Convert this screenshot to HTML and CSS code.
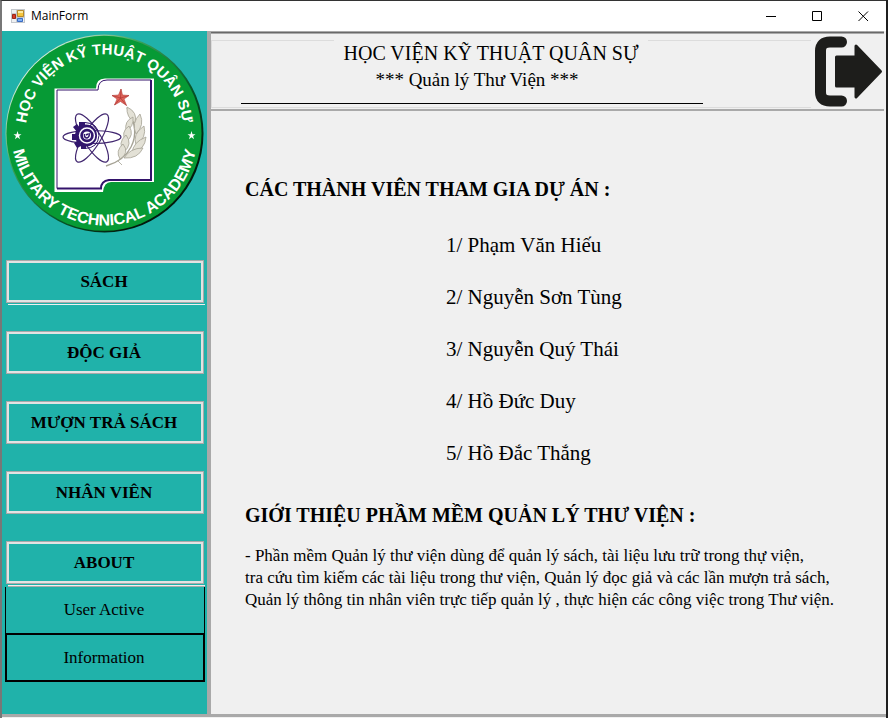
FILE: index.html
```html
<!DOCTYPE html>
<html lang="vi">
<head>
<meta charset="utf-8">
<meta name="viewport" content="width=device-width, initial-scale=1">
<title>MainForm</title>
<link rel="stylesheet" href="styles.css">
</head>
<body>
<div class="window">
  <header class="titlebar">
    <svg class="app-icon" viewBox="0 0 14 14" aria-hidden="true">
      <path d="M0 0H14V14H0Z" fill="#c3c7cc"/>
      <path d="M1 1H5V4H1ZM1 10H5V13H1ZM12 9H13V13H12Z" fill="#eef0f2"/>
      <path d="M6.500 1.500H12.500V7.500H6.500Z" fill="#f6c63c" stroke="#b8892a"/>
      <path d="M7 2H12V4H7Z" fill="#fdeaa0"/>
      <path d="M1.500 5.500H4.500V9.500H1.500Z" fill="#d83a26" stroke="#9c2418"/>
      <path d="M6.500 9.500H11.500V12.500H6.500Z" fill="#7fb0f5" stroke="#3a6cc4"/>
    </svg>
    <span class="window-title">MainForm</span>
    <div class="window-controls">
      <button type="button" aria-label="Minimize"><svg viewBox="0 0 11 11"><path d="M0 5.500H10"/></svg></button>
      <button type="button" aria-label="Maximize"><svg viewBox="0 0 11 11"><path d="M.5 .5H9.500V9.500H.5Z"/></svg></button>
      <button type="button" aria-label="Close"><svg viewBox="0 0 11 11"><path d="M.5 .5L10 10M10 .5L.5 10"/></svg></button>
    </div>
  </header>

  <div class="workspace">
    <aside class="sidebar">
      <svg class="logo" viewBox="2 31 205 205" role="img" aria-label="Học viện Kỹ thuật Quân sự">
        <defs>
          <linearGradient id="rim" x1="0" y1="0" x2="1" y2="1">
            <stop offset="0.15" stop-color="#d4ebd8"/>
            <stop offset="0.35" stop-color="#3ba35a"/>
            <stop offset="0.6" stop-color="#07592a"/>
            <stop offset="0.8" stop-color="#021a0c"/>
          </linearGradient>
          <path id="arc-top" d="M25.500 133.500A79 79 0 0 1 183.500 133.500"/>
          <path id="arc-bottom" d="M11.500 132.500A93 93 0 0 0 197.500 132.500"/>
        </defs>
        <circle cx="104.500" cy="133.500" r="99" fill="url(#rim)"/>
        <circle cx="104" cy="133.300" r="97.500" fill="#069a35"/>
        <g class="logo-text">
          <text class="logo-text-top"><textPath href="#arc-top" startOffset="50%">HỌC VIỆN KỸ THUẬT QUÂN SỰ</textPath></text>
          <text><textPath href="#arc-bottom" startOffset="50%">MILITARY TECHNICAL ACADEMY</textPath></text>
        </g>
        <path id="small-star" d="M17.500 131L18.500 134.200H21.500L19.100 136.100L20 139.200L17.500 137.300L15 139.200L15.900 136.100L13.500 134.200H16.500Z" fill="#fff"/>
        <use href="#small-star" x="174"/>
        <path d="M54.500 88.500H96Q96 78.500 105 78.500H154V182H111Q104 182 103 192H54.500Z" fill="#fff"/>
        <path d="M57 90H98Q98 80 107 80H151V180H109Q101 181 101 188.500H57Z" fill="#fff" stroke="#33136b"/>
        <path d="M151 80V180H109Q101 181 101 188.500H57" fill="none" stroke="#33136b" stroke-width="2"/>
        <g fill="none" stroke="#40266f" stroke-width="1.200">
          <ellipse cx="92" cy="137" rx="29" ry="6.500"/>
          <ellipse cx="92" cy="138" rx="28" ry="8.500" transform="rotate(58 92 138)"/>
          <ellipse cx="92" cy="138" rx="28" ry="8.500" transform="rotate(-58 92 138)"/>
        </g>
        <g fill="#31156d">
          <circle cx="86" cy="135.500" r="11"/>
          <path d="M79 122H85V128H79ZM73 127L77 124L81 129L77 132ZM72 134H79V140H72ZM74 143L80 139L83 145L77 148ZM81 142H86V149H81Z"/>
          <path d="M85 122.500Q98 123 99 135.500Q98 148 85 148.500" fill="none" stroke="#31156d"/>
        </g>
        <circle cx="87" cy="135.500" r="7.500" fill="none" stroke="#fff" stroke-width="1.500"/>
        <circle cx="87" cy="135.500" r="4" fill="#fff"/>
        <path d="M84.500 134Q84 138 87 138Q90 137 89 133M86 135L88 134" fill="none" stroke="#31156d" stroke-width="1.500"/>
        <path d="M121 89L122.500 95L129 95.500L124 99L126.500 105.500L120.500 101.500L114.500 105L117 99L112 95.500L118.500 95Z" fill="#df6459" stroke="#b94440" stroke-width=".6"/>
        <path d="M120.500 98L121 89M120.500 98L129 95.500M120.500 98L126.500 105.500M120.500 98L114.500 105M120.500 98L112 95.500" stroke="#a82f30" stroke-width=".6"/>
        <g fill="#e3e1d6" stroke="#a5a294" stroke-width=".8">
          <path d="M106 166Q124 161 131 147Q140 130 127 108" fill="none" stroke-width="1.300"/>
          <path d="M127 107Q138 112 135 123Q126 117 127 107Z"/>
          <path d="M133 117Q124 121 126 131Q134 127 133 117Z"/>
          <path d="M140 114Q145 125 136 134Q131 123 140 114Z"/>
          <path d="M129 126Q120 132 126 142Q135 135 129 126Z"/>
          <path d="M144 126Q147 138 136 145Q132 134 144 126Z"/>
          <path d="M126 135Q117 143 124 152Q133 144 126 135Z"/>
          <path d="M146 137Q145 150 132 153Q133 142 146 137Z"/>
          <path d="M123 144Q115 151 120 159Q130 153 123 144Z"/>
          <path d="M143 148Q138 159 124 158Q130 148 143 148Z"/>
          <path d="M118 161L122 165" fill="none"/>
        </g>
      </svg>

      <nav class="menu">
        <div class="menu-group menu-group-ruled"><button type="button" class="menu-button">SÁCH</button></div>
        <div class="menu-group"><button type="button" class="menu-button">ĐỘC GIẢ</button></div>
        <div class="menu-group"><button type="button" class="menu-button">MƯỢN TRẢ SÁCH</button></div>
        <div class="menu-group"><button type="button" class="menu-button">NHÂN VIÊN</button></div>
        <div class="menu-group menu-group-ruled menu-group-open"><button type="button" class="menu-button">ABOUT</button></div>
      </nav>
      <div class="submenu">
        <button type="button" class="submenu-button submenu-button-thin">User Active</button>
        <button type="button" class="submenu-button">Information</button>
      </div>
    </aside>

    <main class="main">
      <div class="banner">
        <div class="banner-box">
          <h1>HỌC VIỆN KỸ THUẬT QUÂN SỰ</h1>
          <p>*** Quản lý Thư Viện ***</p>
        </div>
        <button type="button" class="exit" aria-label="Thoát">
          <svg viewBox="814 35 70 73">
            <path d="M842.500 42H831Q821.500 42 821.500 51V92Q821.500 101 831 101H842.500" fill="none" stroke="#1d1d1b" stroke-width="11" stroke-linecap="round"/>
            <path d="M837.500 57H857V46L881.500 71.500L857 97V86H837.500Z" fill="#1d1d1b" stroke="#1d1d1b" stroke-width="3" stroke-linejoin="round"/>
          </svg>
        </button>
      </div>

      <section class="about">
        <h2>CÁC THÀNH VIÊN THAM GIA DỰ ÁN :</h2>
        <ul class="members">
          <li>1/ Phạm Văn Hiếu</li>
          <li>2/ Nguyễn Sơn Tùng</li>
          <li>3/ Nguyễn Quý Thái</li>
          <li>4/ Hồ Đức Duy</li>
          <li>5/ Hồ Đắc Thắng</li>
        </ul>
        <h2>GIỚI THIỆU PHẦM MỀM QUẢN LÝ THƯ VIỆN :</h2>
        <p class="intro">- Phần mềm Quản lý thư viện dùng để quản lý sách, tài liệu lưu trữ trong thự viện,<br>
        tra cứu tìm kiếm các tài liệu trong thư viện, Quản lý đọc giả và các lần mượn trả sách,<br>
        Quản lý thông tin nhân viên trực tiếp quản lý , thực hiện các công việc trong Thư viện.</p>
      </section>
    </main>
  </div>
</div>
</body>
</html>
```
FILE: styles.css
```css
* {
  box-sizing: border-box;
}

body {
  margin: 0;
  background: #1f1f1f;
  color: #000;
  font-family: "Palatino Linotype", "Liberation Serif", serif;
}

button {
  margin: 0;
  padding: 0;
  border: 0;
  background: none;
  color: inherit;
  font: inherit;
}

h1,
h2,
p,
ul {
  margin: 0;
  padding: 0;
}

.window {
  display: flex;
  flex-direction: column;
  min-height: 100vh;
  margin-right: 2px;
  border-top: 1px solid #333;
  border-left: 2px solid #777;
  background: #f0f0f0;
}

.titlebar {
  display: flex;
  align-items: center;
  height: 30px;
  padding-left: 9px;
  background: #fff;
  font: 12px/16px "Open Sans", "Noto Sans", sans-serif;
}

.app-icon {
  width: 14px;
  height: 14px;
  margin-right: 6px;
}

.window-controls {
  display: flex;
  align-self: stretch;
  margin-left: auto;
}

.window-controls button {
  display: grid;
  place-items: center;
  width: 46px;
}

.window-controls svg {
  width: 11px;
  height: 11px;
  fill: none;
  stroke: #000;
}

.workspace {
  display: flex;
  flex: 1;
  margin-bottom: 1px;
  border-bottom: 3px solid #a9a9a9;
}

.sidebar {
  flex: 0 0 205px;
  background: #20b2aa;
}

.logo {
  display: block;
  width: 205px;
  height: 205px;
}

.logo-text {
  fill: #fff;
  font: bold 16px "Liberation Sans", sans-serif;
  text-anchor: middle;
}

.logo-text-top {
  font-size: 15px;
}

.menu {
  display: grid;
  grid-template-rows: 71px 70px 70px 70px 46px;
  padding: 24px 2px 0 4px;
}

.menu-group {
  padding-right: 1px;
}

.menu-group-ruled::after {
  content: "";
  display: block;
  margin: 1px -1px 0 2px;
  border-top: 1px solid #f0f0f0;
}

.menu-group-open::after {
  border-bottom: 1px solid #a9a9a9;
}

.menu-button {
  display: block;
  width: 100%;
  height: 43px;
  padding-right: 2px;
  border: 3px solid #e3e3e3;
  outline: 1px solid #a9a9a9;
  outline-offset: -1px;
  font-size: 17px;
  font-weight: bold;
}

.submenu {
  padding: 0 2px 0 3px;
}

.submenu-button {
  display: block;
  width: 100%;
  height: 49px;
  padding-right: 2px;
  border: 2px solid #000;
  font-size: 17px;
}

.submenu-button-thin {
  height: 46px;
  border-width: 0 1px;
}

.main {
  flex: 1;
  margin-right: 2px;
  border-left: 4px solid #a9a9a9;
}

.banner {
  display: flex;
  height: 80px;
  padding-top: 2px;
  border-top: 1px solid #a9a9a9;
  border-bottom: 2px solid #a9a9a9;
  box-shadow: inset 0 1px #696969, inset 0 2px #a9a9a9;
}

.banner-box {
  flex: 1;
  height: 68px;
  margin-top: 6px;
  border: 1px solid #dcdcdc;
  border-right: 0;
  font-size: 20px;
  line-height: 26px;
  text-align: center;
}

.banner-box h1 {
  width: 314px;
  margin: -1px 0 0 122px;
  background: #f0f0f0;
  font-size: inherit;
  font-weight: normal;
}

.banner-box p {
  margin: 0 108px 0 29px;
  padding: 1px 0 10px 10px;
  border-bottom: 1px solid #000;
  font-size: 19px;
}

.exit {
  width: 70px;
  height: 73px;
  margin: 1px 1px 0 2px;
}

.exit svg {
  display: block;
  width: 70px;
  height: 73px;
}

.about {
  padding: 64px 34px 24px;
}

.about h2 {
  font-size: 20px;
  line-height: 28px;
}

.members {
  padding: 16px 0 22px 201px;
  list-style: none;
  font-size: 21px;
  line-height: 52px;
}

.intro {
  padding-top: 16px;
  font-size: 17px;
  line-height: 22px;
  white-space: nowrap;
}
```
